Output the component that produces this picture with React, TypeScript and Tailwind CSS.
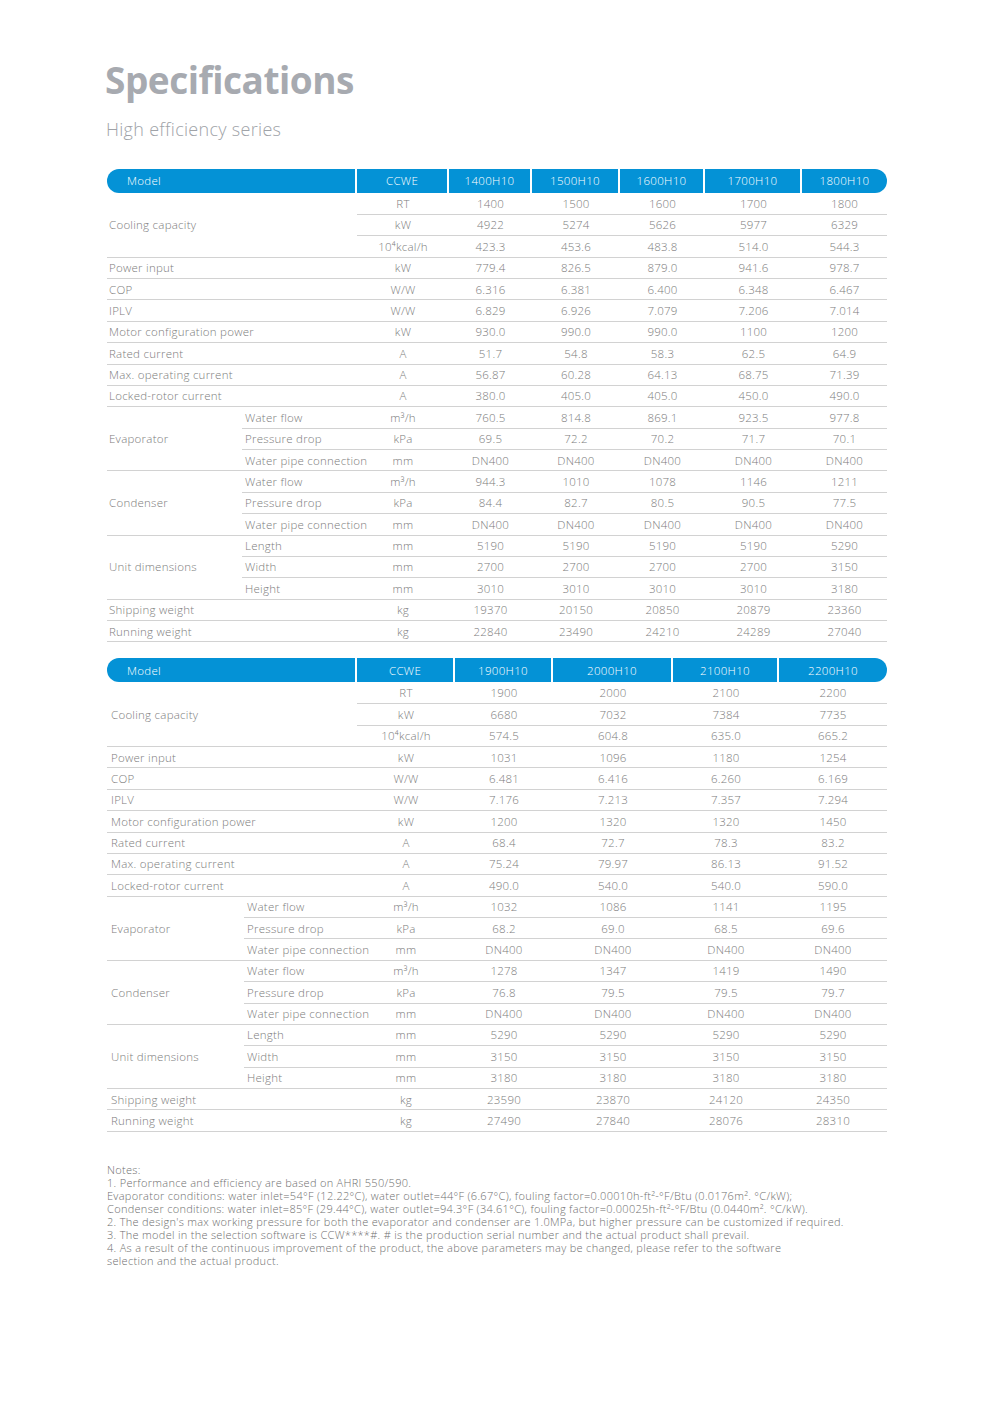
import React from "react";

{/* SPEC DATA */}
type SpecRow = { sub?: string; unit: string; v: string[] };
type Section = { label: string; rows: SpecRow[] };

const rep = (s: string, n: number) => Array.from({ length: n }, () => s);

const tableOne: Section[] = [
  {
    label: "Cooling capacity",
    rows: [
      { unit: "RT", v: ["1400", "1500", "1600", "1700", "1800"] },
      { unit: "kW", v: ["4922", "5274", "5626", "5977", "6329"] },
      { unit: "10⁴kcal/h", v: ["423.3", "453.6", "483.8", "514.0", "544.3"] },
    ],
  },
  { label: "Power input", rows: [{ unit: "kW", v: ["779.4", "826.5", "879.0", "941.6", "978.7"] }] },
  { label: "COP", rows: [{ unit: "W/W", v: ["6.316", "6.381", "6.400", "6.348", "6.467"] }] },
  { label: "IPLV", rows: [{ unit: "W/W", v: ["6.829", "6.926", "7.079", "7.206", "7.014"] }] },
  { label: "Motor configuration power", rows: [{ unit: "kW", v: ["930.0", "990.0", "990.0", "1100", "1200"] }] },
  { label: "Rated current", rows: [{ unit: "A", v: ["51.7", "54.8", "58.3", "62.5", "64.9"] }] },
  { label: "Max. operating current", rows: [{ unit: "A", v: ["56.87", "60.28", "64.13", "68.75", "71.39"] }] },
  { label: "Locked-rotor current", rows: [{ unit: "A", v: ["380.0", "405.0", "405.0", "450.0", "490.0"] }] },
  {
    label: "Evaporator",
    rows: [
      { sub: "Water flow", unit: "m³/h", v: ["760.5", "814.8", "869.1", "923.5", "977.8"] },
      { sub: "Pressure drop", unit: "kPa", v: ["69.5", "72.2", "70.2", "71.7", "70.1"] },
      { sub: "Water pipe connection", unit: "mm", v: rep("DN400", 5) },
    ],
  },
  {
    label: "Condenser",
    rows: [
      { sub: "Water flow", unit: "m³/h", v: ["944.3", "1010", "1078", "1146", "1211"] },
      { sub: "Pressure drop", unit: "kPa", v: ["84.4", "82.7", "80.5", "90.5", "77.5"] },
      { sub: "Water pipe connection", unit: "mm", v: rep("DN400", 5) },
    ],
  },
  {
    label: "Unit dimensions",
    rows: [
      { sub: "Length", unit: "mm", v: ["5190", "5190", "5190", "5190", "5290"] },
      { sub: "Width", unit: "mm", v: ["2700", "2700", "2700", "2700", "3150"] },
      { sub: "Height", unit: "mm", v: ["3010", "3010", "3010", "3010", "3180"] },
    ],
  },
  { label: "Shipping weight", rows: [{ unit: "kg", v: ["19370", "20150", "20850", "20879", "23360"] }] },
  { label: "Running weight", rows: [{ unit: "kg", v: ["22840", "23490", "24210", "24289", "27040"] }] },
];

const tableTwo: Section[] = [
  {
    label: "Cooling capacity",
    rows: [
      { unit: "RT", v: ["1900", "2000", "2100", "2200"] },
      { unit: "kW", v: ["6680", "7032", "7384", "7735"] },
      { unit: "10⁴kcal/h", v: ["574.5", "604.8", "635.0", "665.2"] },
    ],
  },
  { label: "Power input", rows: [{ unit: "kW", v: ["1031", "1096", "1180", "1254"] }] },
  { label: "COP", rows: [{ unit: "W/W", v: ["6.481", "6.416", "6.260", "6.169"] }] },
  { label: "IPLV", rows: [{ unit: "W/W", v: ["7.176", "7.213", "7.357", "7.294"] }] },
  { label: "Motor configuration power", rows: [{ unit: "kW", v: ["1200", "1320", "1320", "1450"] }] },
  { label: "Rated current", rows: [{ unit: "A", v: ["68.4", "72.7", "78.3", "83.2"] }] },
  { label: "Max. operating current", rows: [{ unit: "A", v: ["75.24", "79.97", "86.13", "91.52"] }] },
  { label: "Locked-rotor current", rows: [{ unit: "A", v: ["490.0", "540.0", "540.0", "590.0"] }] },
  {
    label: "Evaporator",
    rows: [
      { sub: "Water flow", unit: "m³/h", v: ["1032", "1086", "1141", "1195"] },
      { sub: "Pressure drop", unit: "kPa", v: ["68.2", "69.0", "68.5", "69.6"] },
      { sub: "Water pipe connection", unit: "mm", v: rep("DN400", 4) },
    ],
  },
  {
    label: "Condenser",
    rows: [
      { sub: "Water flow", unit: "m³/h", v: ["1278", "1347", "1419", "1490"] },
      { sub: "Pressure drop", unit: "kPa", v: ["76.8", "79.5", "79.5", "79.7"] },
      { sub: "Water pipe connection", unit: "mm", v: rep("DN400", 4) },
    ],
  },
  {
    label: "Unit dimensions",
    rows: [
      { sub: "Length", unit: "mm", v: rep("5290", 4) },
      { sub: "Width", unit: "mm", v: rep("3150", 4) },
      { sub: "Height", unit: "mm", v: rep("3180", 4) },
    ],
  },
  { label: "Shipping weight", rows: [{ unit: "kg", v: ["23590", "23870", "24120", "24350"] }] },
  { label: "Running weight", rows: [{ unit: "kg", v: ["27490", "27840", "28076", "28310"] }] },
];

const notes = [
  "Notes:",
  "1. Performance and efficiency are based on AHRI 550/590.",
  "Evaporator conditions: water inlet=54°F (12.22°C), water outlet=44°F (6.67°C), fouling factor=0.00010h-ft²-°F/Btu (0.0176m². °C/kW);",
  "Condenser conditions: water inlet=85°F (29.44°C), water outlet=94.3°F (34.61°C), fouling factor=0.00025h-ft²-°F/Btu (0.0440m². °C/kW).",
  "2. The design's max working pressure for both the evaporator and condenser are 1.0MPa, but higher pressure can be customized if required.",
  "3. The model in the selection software is CCW****#. # is the production serial number and the actual product shall prevail.",
  "4. As a result of the continuous improvement of the product, the above parameters may be changed, please refer to the software",
  "selection and the actual product.",
];

{/* ONE SPEC TABLE */}
function SpecTable({
  models,
  headWidths,
  cols,
  labelPad,
  subPad,
  sections,
}: {
  models: string[];
  headWidths: number[];
  cols: number[];
  labelPad: string;
  subPad: string;
  sections: Section[];
}) {
  const cell = "border-b border-[#d2d2d2] h-[21.38px] p-0 align-middle whitespace-nowrap";
  return (
    <div className="w-[780px]">
      {/* HEADER BAR */}
      <div className="flex gap-[2px] h-[24px] text-white text-[11.5px] tracking-[0.3px]">
        {["Model", "CCWE", ...models].map((m, i) => (
          <div
            key={m}
            style={{ width: headWidths[i] }}
            className={
              "bg-[#0492d6] flex items-center " +
              (i === 0 ? "rounded-l-full pl-[20px]" : "justify-center") +
              (i === models.length + 1 ? " rounded-r-full" : "")
            }
          >
            {m}
          </div>
        ))}
      </div>

      {/* BODY */}
      <table className="table-fixed border-collapse w-[780px] text-[11.5px] tracking-[0.25px] text-[#7c7c7c]">
        <colgroup>
          {cols.map((w, i) => (
            <col key={i} style={{ width: w }} />
          ))}
        </colgroup>
        <tbody>
          {sections.map((s) =>
            s.rows.map((r, i) => {
              const hasSub = !!r.sub;
              return (
                <tr key={s.label + i}>
                  {i === 0 && (
                    <td
                      rowSpan={s.rows.length}
                      colSpan={hasSub ? 1 : 2}
                      className={`${cell} ${labelPad} text-left`}
                    >
                      {s.label}
                    </td>
                  )}
                  {hasSub && <td className={`${cell} ${subPad} text-left overflow-visible`}>{r.sub}</td>}
                  <td className={`${cell} text-center`}>{r.unit}</td>
                  {r.v.map((v, j) => (
                    <td key={j} className={`${cell} text-center`}>
                      {v}
                    </td>
                  ))}
                </tr>
              );
            })
          )}
        </tbody>
      </table>
    </div>
  );
}

{/* PAGE */}
export default function App() {
  return (
    <main className="min-h-[1403px] w-[992px] bg-white font-['Open_Sans','Liberation_Sans',sans-serif] font-light">
      <div className="pl-[107px] pt-[56px] flex flex-col">
        <h1 className="text-[37px] leading-[48px] font-bold text-[#a7aab0] tracking-[-0.5px] -ml-[2px]">
          Specifications
        </h1>
        <p className="mt-[14px] text-[18px] leading-[22px] text-[#a0a3a8] tracking-[0.3px] -ml-[1px]">
          High efficiency series
        </p>

        <div className="mt-[29px]">
          <SpecTable
            models={["1400H10", "1500H10", "1600H10", "1700H10", "1800H10"]}
            headWidths={[248, 90, 81, 86, 83, 95, 85]}
            cols={[135, 115, 92, 83, 88, 85, 97, 85]}
            labelPad="pl-[2px]"
            subPad="pl-[3px]"
            sections={tableOne}
          />
        </div>

        <div className="mt-[16px]">
          <SpecTable
            models={["1900H10", "2000H10", "2100H10", "2200H10"]}
            headWidths={[248, 96, 96, 118, 104, 108]}
            cols={[137, 113, 98, 98, 120, 106, 108]}
            labelPad="pl-[4px]"
            subPad="pl-[3px]"
            sections={tableTwo}
          />
        </div>

        {/* NOTES */}
        <div className="mt-[31px] text-[11px] leading-[13px] tracking-[0.3px] text-[#6f6f6f]">
          {notes.map((n) => (
            <div key={n} className="whitespace-nowrap">
              {n}
            </div>
          ))}
        </div>
      </div>
    </main>
  );
}
